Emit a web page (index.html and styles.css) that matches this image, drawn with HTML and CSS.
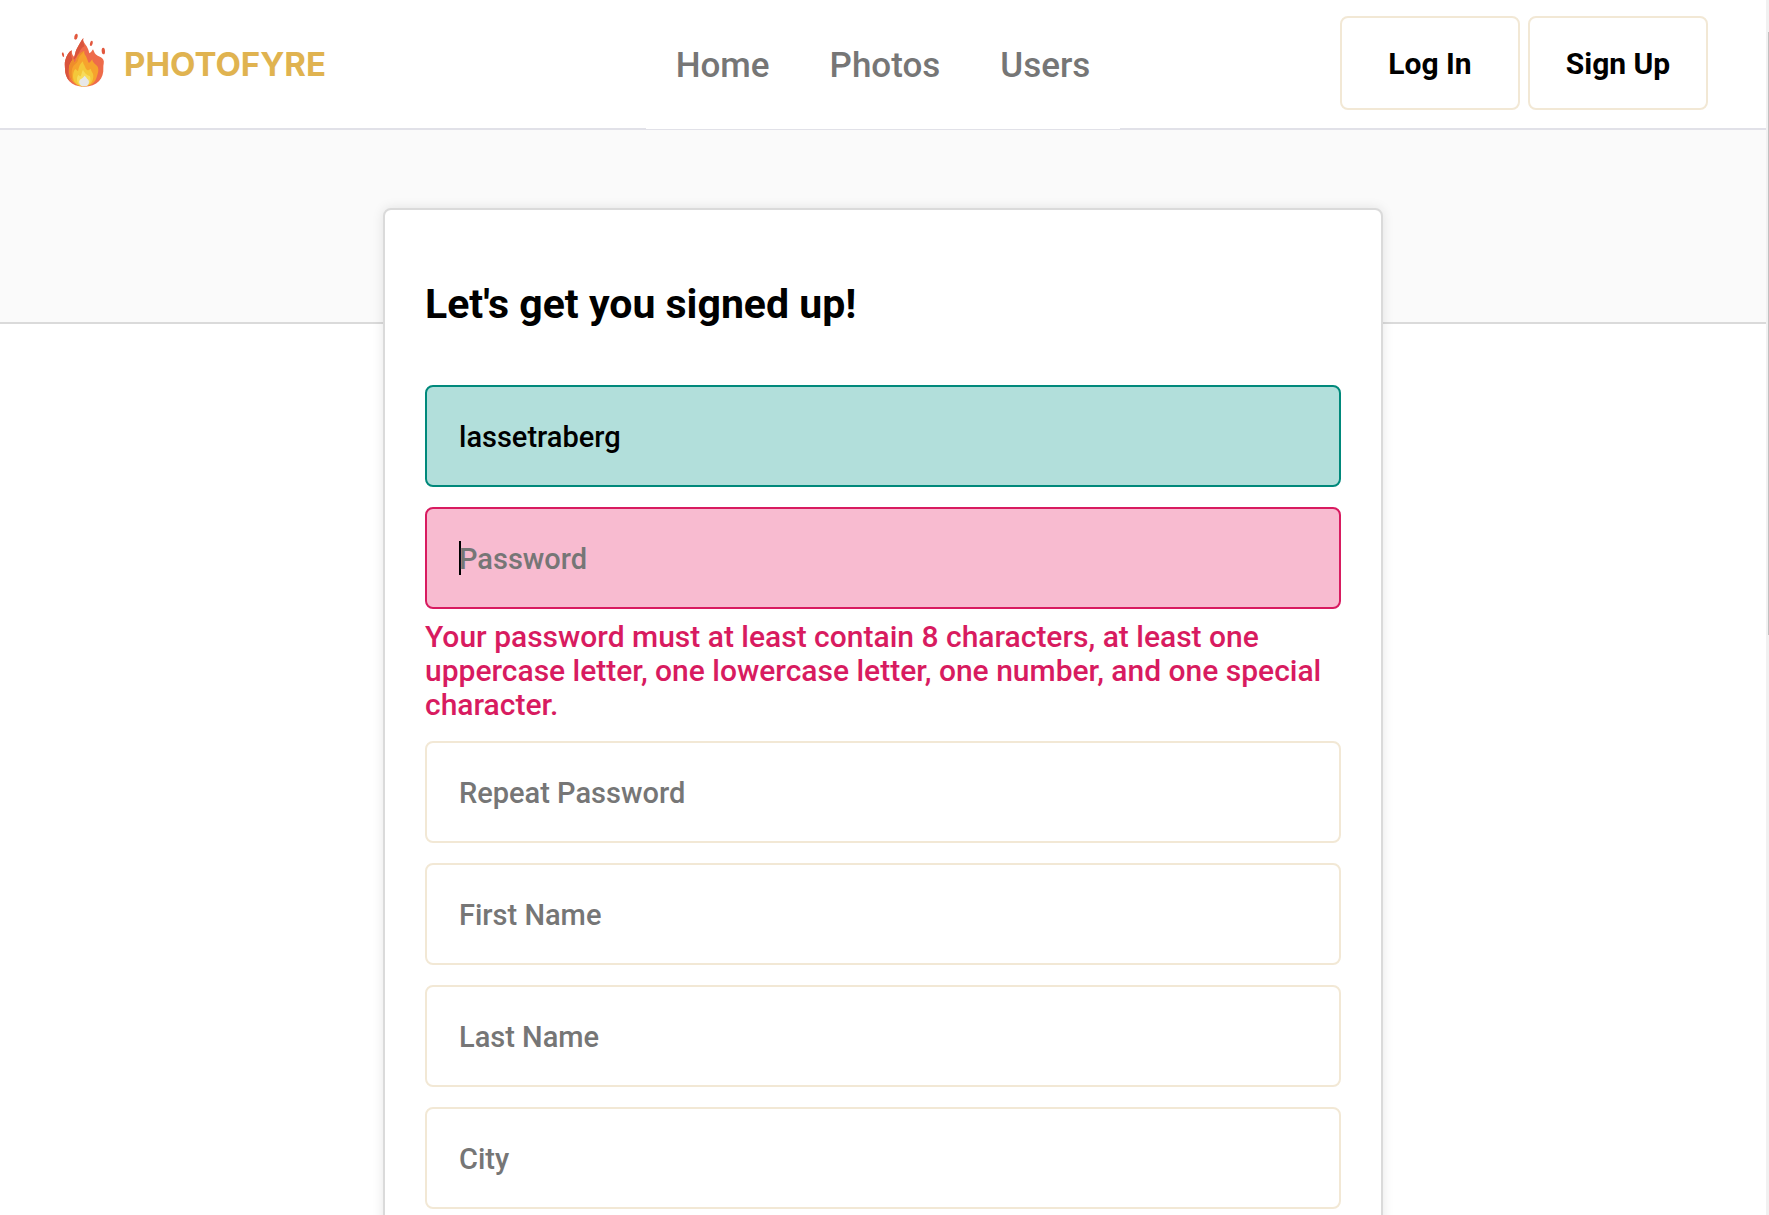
FILE: index.html
```html
<!DOCTYPE html>
<html lang="en">
<head>
  <meta charset="utf-8">
  <meta name="viewport" content="width=device-width, initial-scale=1">
  <title>Photofyre - Sign Up</title>
  <link rel="stylesheet" href="styles.css">
</head>
<body>
  <header class="site-header">
    <a class="brand" href="#">
      <svg class="brand-icon" viewBox="24 18 162 192" aria-hidden="true">
        <g fill="#e2573d">
          <ellipse cx="78" cy="32" rx="5" ry="9" transform="rotate(14 78 32)"/>
          <ellipse cx="124" cy="52" rx="4" ry="8" transform="rotate(16 124 52)"/>
          <ellipse cx="160" cy="75" rx="5" ry="10" transform="rotate(-4 160 75)"/>
          <ellipse cx="39" cy="86" rx="3" ry="7" transform="rotate(-12 39 86)"/>
        </g>
        <path fill="#ee6b4a" d="M100 36c-3 9 5 17 10 25 4 7 6 13 8 21 5-2 7-7 11-12 4 9 6 16 14 19 7 3 13 4 17 12 4 7-1 16 0 25 2 31-18 56-58 56S44 155 45 128c0-9-2-17 1-26 4-13 10-24 19-29 0 9 2 15 7 19 4-6 3-14 8-23 7-12 12-23 20-33z"/>
        <path fill="#d9543c" d="M100 36c-3 10 3 18 3 25-9 5-13 12-16 20-6 4-5 11-10 14l-8 9c-5-8-7-19-4-31-9 5-15 16-19 29-3 9-1 17-1 26 0 16 5 28 14 37-6-24-5-53 10-64 5-3 5-20 11-32 7-12 12-23 20-33z"/>
        <path fill="#f6a32d" d="M103 75c-2 9 4 12 6 18 3 6 4 13 8 18 5-3 6-7 10-11 0 10 10 14 15 21 6 10 2 20-2 33-4 15-17 27-38 27s-38-12-42-32c-3-14-5-27 2-39 3-5 5-10 8-12 1 5 1 9 5 12 4-9 7-22 14-27 5-4 10-6 14-8z"/>
        <path fill="#ee8d2b" d="M103 75c-4 2-9 4-14 8-7 5-10 18-14 27-4-3-4-7-5-12-3 2-5 7-8 12-7 12-5 25-2 39 1 6 4 11 8 16-4-19-5-35 4-47 6-6 11-8 13-18 3-12 12-16 18-25z"/>
        <path fill="#f4c83a" d="M99 106c0 8 4 10 6 16 2 5 4 9 8 11 4 0 6-3 9-5 1 8 8 12 8 21 0 18-10 32-28 32s-32-10-33-28c0-11 2-19 7-24 3 2 5 5 8 6 3-9 3-19 15-29z"/>
        <path fill="#f7dc5b" d="M99 131c2 6 5 8 8 12 4 4 8 5 12 7 3 5 3 12 1 18-3 8-9 13-18 13-13 0-21-9-21-22 0-6 2-9 4-12 3 2 5 4 7 4 3-6 3-13 7-20z"/>
        <path fill="#e8e8e8" d="M104 149c3 3 5 5 7 9 6 3 7 9 5 15-2 5-7 8-14 8s-13-4-14-11c-1-5 1-9 5-11 3-3 8-5 11-10z"/>
      </svg>
      <span>PHOTOFYRE</span>
    </a>
    <nav class="site-nav">
      <a href="#">Home</a>
      <a href="#">Photos</a>
      <a href="#">Users</a>
    </nav>
    <div class="account">
      <button class="account-button" type="button">Log In</button>
      <button class="account-button" type="button">Sign Up</button>
    </div>
  </header>

  <main class="page">
    <form class="card">
      <h1 class="card-title">Let's get you signed up!</h1>
      <div class="field">
        <input class="input input-valid" type="text" aria-label="Username" placeholder="Username" value="lassetraberg">
      </div>
      <div class="field">
        <input class="input input-invalid" type="password" aria-label="Password" placeholder="Password" aria-describedby="password-error">
        <p class="error" id="password-error">Your password must at least contain 8 characters, at least one uppercase letter, one lowercase letter, one number, and one special character.</p>
      </div>
      <div class="field">
        <input class="input" type="password" aria-label="Repeat Password" placeholder="Repeat Password">
      </div>
      <div class="field">
        <input class="input" type="text" aria-label="First Name" placeholder="First Name">
      </div>
      <div class="field">
        <input class="input" type="text" aria-label="Last Name" placeholder="Last Name">
      </div>
      <div class="field">
        <input class="input" type="text" aria-label="City" placeholder="City">
      </div>
    </form>
  </main>

  <div class="scroll-track" aria-hidden="true"><div class="scroll-thumb"></div></div>
</body>
</html>
```
FILE: styles.css
```css
* {
  box-sizing: border-box;
}

body {
  margin: 0;
  padding-right: 3px;
  background: #fff;
  color: #000;
  font-family: Roboto, "Liberation Sans", sans-serif;
  font-weight: 500;
}

.site-header {
  display: grid;
  grid-template-columns: 1fr auto 1fr;
  align-items: start;
  height: 130px;
  padding: 0 58px;
  border-bottom: 2px solid #e1e1e8;
  background: #fff;
}

.brand {
  display: flex;
  align-items: center;
  gap: 12px;
  height: 128px;
  color: #e0b350;
  font-family: Inter, "Liberation Sans", sans-serif;
  font-size: 33px;
  font-weight: 700;
  text-decoration: none;
}

.brand-icon {
  width: 54px;
  height: 64px;
}

.site-nav {
  display: flex;
  height: 129px;
  background: #fff;
}

.site-nav a {
  display: flex;
  align-items: center;
  padding: 2px 30px 0;
  color: #767676;
  font-size: 35px;
  text-decoration: none;
}

.account {
  display: flex;
  align-items: center;
  justify-content: flex-end;
  gap: 8px;
  height: 126px;
}

.account-button {
  width: 180px;
  height: 94px;
  padding: 0;
  border: 2px solid #f2e8d5;
  border-radius: 8px;
  background: #fff;
  color: #000;
  font: inherit;
  font-size: 30px;
  font-weight: 700;
}

.page {
  padding: 78px 20px 0;
  background: linear-gradient(#fafafa 192px, #dadada 192px, #dadada 194px, #fff 194px);
}

.card {
  display: flex;
  flex-direction: column;
  gap: 20px;
  max-width: 1000px;
  margin: 0 auto;
  padding: 69px 40px 40px;
  border: 2px solid #dadada;
  border-radius: 8px;
  background: #fff;
  box-shadow: 0 0 12px rgba(0, 0, 0, 0.1);
}

.card-title {
  margin: 0 0 36px;
  font-size: 41px;
  font-weight: 700;
  line-height: 50px;
}

.input {
  display: block;
  width: 100%;
  height: 102px;
  padding: 2px 32px 0;
  border: 2px solid #f2e8d5;
  border-radius: 8px;
  outline: 0;
  background-color: #fff;
  color: #000;
  font: inherit;
  font-size: 29px;
}

.input::placeholder {
  color: #767676;
  opacity: 1;
}

.input-valid {
  border-color: #00897b;
  background-color: #b2dfdb;
}

.input-invalid {
  border-color: #d81b60;
  background: #f8bbd0 linear-gradient(#000, #000) 32px center / 2px 34px no-repeat;
}

.error {
  margin: 11px 0 -1px;
  color: #d81b60;
  font-size: 30px;
  line-height: 34px;
}

.scroll-track {
  position: fixed;
  top: 0;
  right: 0;
  bottom: 0;
  width: 3px;
  padding: 32px 0 0 2px;
  background: #f1f1f1;
}

.scroll-thumb {
  height: 51%;
  background: #c1c1c1;
}
```
